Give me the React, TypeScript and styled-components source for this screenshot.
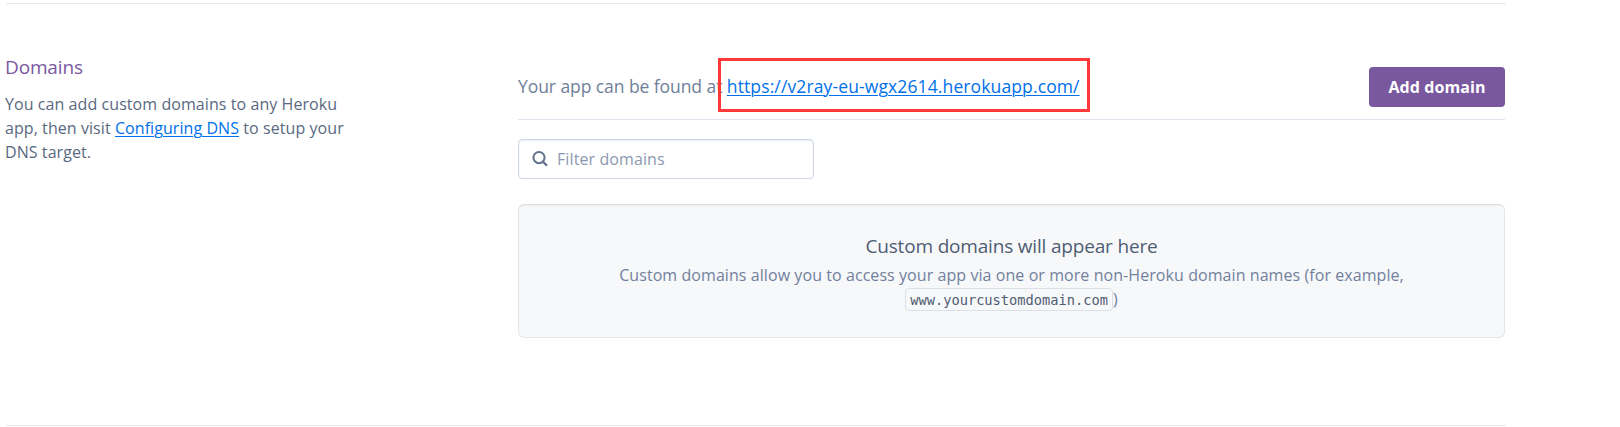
import React from "react";
import styled, { createGlobalStyle } from "styled-components";

const GlobalStyle = createGlobalStyle`
  *, *::before { box-sizing: border-box; }
  body {
    margin: 0;
    background: #fff;
    color: #596981;
    font: 16px/24px "Open Sans", "Noto Sans", sans-serif;
  }
  h2, h3, p { margin: 0; font-weight: 400; }
`;

const Section = styled.section`
  display: grid;
  grid-template-columns: 512px 987px;
  width: 1500px;
  height: 423px;
  margin: 3px 0 0 6px;
  padding-top: 50px;
  border-top: 1px solid #e3e7ef;
  border-bottom: 1px solid #e3ebf1;
`;

const Sidebar = styled.div`
  width: 350px;
  margin-left: -1px;
`;

const SectionTitle = styled.h2`
  margin-bottom: 12px;
  padding-top: 1px;
  color: #79589f;
  font-size: 19px;
  line-height: 25px;
  letter-spacing: -0.15px;
`;

const Description = styled.p`
  color: #596981;
  font-size: 16px;
  letter-spacing: 0.07px;
  white-space: nowrap;
`;

const Link = styled.a`
  color: #0070eb;
  text-decoration: underline;
  text-decoration-thickness: 1px;
  text-underline-offset: 2px;
`;

const Content = styled.div`
  display: flex;
  flex-direction: column;
`;

const UrlRow = styled.div`
  display: flex;
  align-items: center;
  justify-content: space-between;
  height: 66px;
  border-bottom: 1px solid #e2e3ef;
`;

const UrlText = styled.p`
  padding-bottom: 2px;
  color: #70809a;
  font-size: 17.5px;
  letter-spacing: -0.07px;
  white-space: nowrap;
`;

const Highlighted = styled.span`
  position: relative;
  letter-spacing: 0.12px;

  &::before {
    content: "";
    position: absolute;
    top: -16px;
    left: -9px;
    width: 372px;
    height: 54px;
    border: 3px solid #ff3838;
  }
`;

const AddButton = styled.button`
  width: 136px;
  height: 40px;
  padding: 0;
  border: 0;
  border-radius: 4px;
  background: #79589f;
  color: #fff;
  font: 700 16px/38px "Open Sans", "Noto Sans", sans-serif;
  letter-spacing: 0.1px;
`;

const SearchField = styled.label`
  display: flex;
  align-items: center;
  gap: 9px;
  width: 296px;
  height: 40px;
  margin-top: 19px;
  padding-left: 13px;
  border: 1px solid #cfd7e6;
  border-radius: 4px;
  box-shadow: inset 0 1px 2px #e9edf4;
`;

const SearchInput = styled.input`
  width: 240px;
  padding: 0;
  border: 0;
  outline: 0;
  background: transparent;
  font: 16px/24px "Open Sans", "Noto Sans", sans-serif;
  letter-spacing: 0.1px;

  &::placeholder { color: #8b99b0; opacity: 1; }
`;

const EmptyState = styled.div`
  height: 134px;
  margin-top: 25px;
  padding-top: 28px;
  border: 1px solid #e3e5e8;
  border-top-color: #dcdee1;
  border-radius: 6px;
  background: #f7f8fa;
  box-shadow: inset 0 1px 1px #eceef0;
  text-align: center;
`;

const EmptyTitle = styled.h3`
  color: #4f5d73;
  font-size: 19px;
  line-height: 26px;
  letter-spacing: -0.18px;
`;

const EmptyText = styled.p`
  margin-top: 4px;
  color: #71819d;
  font-size: 16px;
  letter-spacing: 0.07px;
`;

const Code = styled.code`
  display: inline-block;
  height: 23px;
  padding: 0 4px;
  border: 1px solid #dcdfe5;
  border-radius: 4px;
  color: #4f5d73;
  font: 13.7px/23px "DejaVu Sans Mono", monospace;
  letter-spacing: 0;
`;

const SearchIcon = () => (
  <svg width="16" height="16" viewBox="0 0 16 16" fill="none" stroke="#62718c" strokeWidth="2">
    <circle cx="7" cy="6.6" r="5.6" />
    <path d="M11 10.8 L15 14.8" strokeWidth="2.3" />
  </svg>
);

export default function App() {
  return (
    <>
      <GlobalStyle />
      <Section>
        <Sidebar>
          <SectionTitle>Domains</SectionTitle>
          <Description>
            You can add custom domains to any Heroku
            <br />
            app, then visit <Link>Configuring DNS</Link> to setup your
            <br />
            DNS target.
          </Description>
        </Sidebar>
        <Content>
          <UrlRow>
            <UrlText>
              Your app can be found at{" "}
              <Highlighted>
                <Link>https://v2ray-eu-wgx2614.herokuapp.com/</Link>
              </Highlighted>
            </UrlText>
            <AddButton>Add domain</AddButton>
          </UrlRow>
          <SearchField>
            <SearchIcon />
            <SearchInput placeholder="Filter domains" />
          </SearchField>
          <EmptyState>
            <EmptyTitle>Custom domains will appear here</EmptyTitle>
            <EmptyText>
              Custom domains allow you to access your app via one or more non-Heroku domain names (for example,
              <br />
              <Code>www.yourcustomdomain.com</Code>)
            </EmptyText>
          </EmptyState>
        </Content>
      </Section>
    </>
  );
}
